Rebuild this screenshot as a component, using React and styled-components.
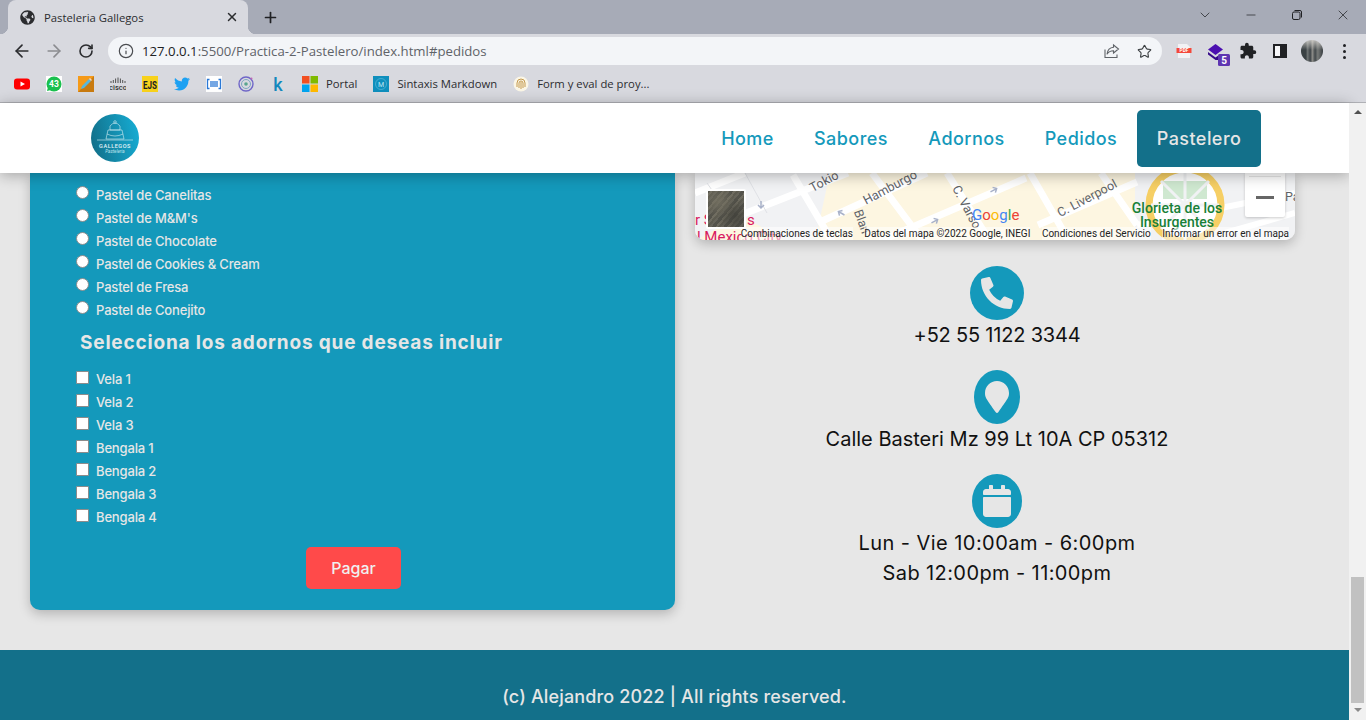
import React from "react";
import styled, { createGlobalStyle } from "styled-components";
import { FaGlobeAmericas, FaPhoneAlt, FaMapMarker, FaCalendar, FaTwitter } from "react-icons/fa";
import { MdExtension } from "react-icons/md";
import { ArrowLeft, ArrowRight, RotateCw, Info, Star, X, Plus, ChevronDown, Minus } from "lucide-react";

const GlobalStyle = createGlobalStyle`
  html, body { margin: 0; padding: 0; overflow: hidden; background: #e7e7e7; }
  * { box-sizing: border-box; }
`;

const Window = styled.div`
  width: 1366px;
  height: 720px;
  overflow: hidden;
  display: flex;
  flex-direction: column;
  font-family: Inter, "Liberation Sans", sans-serif;
`;

/* browser chrome */
const TabStrip = styled.div`
  height: 34px;
  background: #a7abb7;
  display: flex;
  align-items: center;
  padding-left: 8px;
  color: #202124;
  flex: none;
`;

const Tab = styled.div`
  position: relative;
  width: 240px;
  height: 34px;
  background: #d8d9df;
  border-radius: 8px 8px 0 0;
  display: flex;
  align-items: center;
  padding: 0 9px 0 12px;
  &::before, &::after {
    content: "";
    position: absolute;
    bottom: 0;
    width: 8px;
    height: 8px;
  }
  &::before { left: -8px; background: radial-gradient(circle at 0 0, transparent 8px, #d8d9df 8.5px); }
  &::after { right: -8px; background: radial-gradient(circle at 100% 0, transparent 8px, #d8d9df 8.5px); }
`;

const TabTitle = styled.span`
  flex: 1;
  margin-left: 9px;
  font: 11.3px "Open Sans", sans-serif;
  color: #2b2c2f;
`;

const NewTab = styled.div`
  margin-left: 14px;
  display: flex;
`;

const WindowControls = styled.div`
  margin-left: auto;
  display: flex;
  align-items: center;
  height: 100%;
`;

const WindowButton = styled.div`
  width: 46px;
  height: 100%;
  display: flex;
  align-items: center;
  justify-content: center;
  padding-bottom: 4px;
`;

const Toolbar = styled.div`
  height: 34px;
  background: #d8d9df;
  display: flex;
  align-items: center;
  padding-left: 6px;
  flex: none;
`;

const NavIcon = styled.div`
  width: 32px;
  height: 32px;
  display: flex;
  align-items: center;
  justify-content: center;
  flex: none;
`;

const Omnibox = styled.div`
  width: 1054px;
  height: 28px;
  margin: 0 6px;
  background: #f3f5f8;
  border-radius: 14px;
  display: flex;
  align-items: center;
  padding: 0 2px 0 10px;
  flex: none;
`;

const Url = styled.span`
  margin-left: 8px;
  font: 13.2px "Open Sans", sans-serif;
  color: #5f6368;
  flex: 1;
  b { font-weight: 400; color: #202124; }
`;

const Extensions = styled.div`
  display: flex;
  align-items: center;
`;

const Bookmarks = styled.div`
  height: 35px;
  background: #d8d9df;
  border-bottom: 1px solid #b0b1b6;
  display: flex;
  align-items: center;
  padding: 0 0 3px 6px;
  flex: none;
`;

const BookmarkIcon = styled.div`
  width: 32px;
  height: 28px;
  display: flex;
  align-items: center;
  justify-content: center;
`;

const Bookmark = styled.div`
  display: flex;
  align-items: center;
  gap: 8px;
  margin-left: ${(props) => props.$gap || 0}px;
  font: 11.3px "Open Sans", sans-serif;
  color: #2b2c2f;
  white-space: nowrap;
`;

/* page */
const Viewport = styled.div`
  flex: 1;
  display: flex;
  min-height: 0;
`;

const Page = styled.div`
  flex: 1;
  background: #e7e7e7;
  display: flex;
  flex-direction: column;
  min-width: 0;
`;

const Header = styled.header`
  position: relative;
  z-index: 5;
  height: 70px;
  background: #fff;
  box-shadow: 0 2px 14px rgba(0, 0, 0, 0.3);
  display: flex;
  align-items: center;
  justify-content: space-between;
  padding: 0 88px 0 91px;
  flex: none;
`;

const Menu = styled.nav`
  display: flex;
  align-items: center;
  height: 57px;
  margin-top: 1px;
`;

const MenuLink = styled.a`
  height: 100%;
  display: flex;
  align-items: center;
  justify-content: center;
  width: ${(props) => props.$width}px;
  font-size: 18px;
  font-weight: 500;
  letter-spacing: 0.45px;
  color: ${(props) => (props.$active ? "#e6e6e6" : "#1499bb")};
  background: ${(props) => (props.$active ? "#13708a" : "transparent")};
  border-radius: 5px;
`;

const Main = styled.main`
  display: grid;
  grid-template-columns: 645px 600px;
  column-gap: 20px;
  padding: 0 0 40px 30px;
  align-items: start;
  flex: none;
`;

const OrderCard = styled.form`
  height: 437px;
  background: #1499bb;
  border-radius: 0 0 10px 10px;
  box-shadow: 0 4px 12px rgba(0, 0, 0, 0.22);
  padding: 10px 0 0 46px;
  color: #e6e6e6;
  display: flex;
  flex-direction: column;
`;

const OptionRow = styled.label`
  height: 23px;
  display: flex;
  align-items: flex-start;
  font-size: 13px;
  font-weight: 500;
  letter-spacing: -0.15px;
`;

const OptionInput = styled.input`
  appearance: none;
  width: 13px;
  height: 13px;
  margin: ${(props) => (props.type === "radio" ? "3px" : "4px")} 7px 0 0;
  background: #fff;
  border: 1px solid #8c8c8c;
  border-radius: ${(props) => (props.type === "radio" ? "50%" : "1px")};
  flex: none;
`;

const OptionText = styled.span`
  padding-top: 4px;
  line-height: 16px;
`;

const SectionTitle = styled.h3`
  margin: 8px 0 11px 4px;
  font-size: 19px;
  line-height: 27px;
  font-weight: 700;
  letter-spacing: 0.82px;
  white-space: nowrap;
`;

const PayButton = styled.button`
  align-self: center;
  width: 95px;
  height: 42px;
  margin: 19px 0 0 -44px;
  background: #ff4a4a;
  color: #f0f0f0;
  border: 0;
  border-radius: 5px;
  font-family: inherit;
  font-size: 16px;
  font-weight: 500;
`;

const RightColumn = styled.section`
  display: flex;
  flex-direction: column;
  align-items: center;
`;

const MapFrame = styled.div`
  position: relative;
  width: 600px;
  height: 67px;
  border-radius: 0 0 10px 10px;
  overflow: hidden;
  box-shadow: 0 4px 12px rgba(0, 0, 0, 0.22);
  background: #f1f2f4;
  svg { display: block; }
`;

const MapThumb = styled.div`
  position: absolute;
  left: 11px;
  top: 16px;
  width: 40px;
  height: 40px;
  border: 2px solid #fff;
  border-radius: 2px;
  background:
    radial-gradient(circle at 30% 30%, rgba(120, 116, 100, 0.7), transparent 45%),
    radial-gradient(circle at 75% 70%, rgba(60, 60, 54, 0.7), transparent 50%),
    repeating-linear-gradient(-50deg, #5d5b50 0 2px, #6f6c60 2px 4px, #54534b 4px 7px, #66645a 7px 9px);
`;

const MapZoom = styled.div`
  position: absolute;
  right: 10px;
  top: 0;
  width: 40px;
  height: 44px;
  background: #fff;
  border-radius: 0 0 2px 2px;
  box-shadow: 0 1px 3px rgba(0, 0, 0, 0.2);
  display: flex;
  align-items: flex-end;
  justify-content: center;
  padding-bottom: 18px;
  &::before {
    content: "";
    position: absolute;
    top: 3px;
    left: 4px;
    right: 4px;
    height: 1px;
    background: #e6e6e6;
  }
`;

const ZoomMinus = styled.span`
  width: 18px;
  height: 3px;
  background: #666;
`;

const MapFooter = styled.div`
  position: absolute;
  right: 0;
  bottom: 0;
  height: 14px;
  padding: 1px 6px 0 45px;
  display: flex;
  align-items: center;
  gap: 11.5px;
  font: 10px/13px Roboto, sans-serif;
  color: #222;
  white-space: nowrap;
  span { background: rgba(255, 255, 255, 0.55); }
`;

const Contact = styled.div`
  display: flex;
  flex-direction: column;
  align-items: center;
  margin: ${(props) => props.$top}px 0 0 4px;
`;

const ContactBadge = styled.div`
  width: ${(props) => props.$width}px;
  height: 54px;
  border-radius: 50%;
  background: #1499bb;
  color: #e6e6e6;
  display: flex;
  align-items: center;
  justify-content: center;
  font-size: 32px;
`;

const ContactLine = styled.p`
  margin: 0;
  height: 30px;
  font-size: 20px;
  line-height: 30px;
  letter-spacing: ${(props) => props.$spacing}px;
  color: #111;
  white-space: nowrap;
`;

const Footer = styled.footer`
  height: 70px;
  background: #13708a;
  color: #e6e6e6;
  display: flex;
  justify-content: center;
  padding-top: 32px;
  font-size: 18px;
  line-height: 30px;
  font-weight: 500;
  letter-spacing: 0.15px;
  flex: none;
`;

const Scrollbar = styled.div`
  position: relative;
  z-index: 6;
  width: 17px;
  background: #f1f1f1;
  display: flex;
  flex-direction: column;
  align-items: center;
  flex: none;
`;

const ScrollArrow = styled.span`
  width: 0;
  height: 0;
  margin: ${(props) => (props.$down ? "5px 0 0" : "7px 0 0")};
  border-left: 4px solid transparent;
  border-right: 4px solid transparent;
  ${(props) => (props.$down ? "border-top: 4px solid #8a8a8a;" : "border-bottom: 4px solid #505050;")}
`;

const ScrollThumb = styled.div`
  width: 13px;
  height: 126px;
  margin-top: auto;
  background: #c1c1c1;
`;

const ScrollEnd = styled.div`
  height: 17px;
  display: flex;
  justify-content: center;
  align-items: flex-start;
`;

const Avatar = styled.div`
  width: 22px;
  height: 22px;
  border-radius: 50%;
  background:
    linear-gradient(180deg, rgba(225, 222, 216, 0.75) 0, transparent 45%),
    linear-gradient(90deg, #3a4144 0 22%, #6f7474 30%, #3d4347 42%, #8a8a86 52%, #42484b 64%, #777a78 76%, #383d41);
`;

const SidePanelIcon = styled.div`
  width: 14px;
  height: 14px;
  border: 2px solid #202124;
  border-right-width: 7px;
  background: #f6f6f8;
`;

const Dots = styled.div`
  display: flex;
  flex-direction: column;
  gap: 3px;
  span { width: 3px; height: 3px; border-radius: 50%; background: #202124; }
`;

const RestoreIcon = () => (
  <svg width="12" height="12" viewBox="0 0 12 12" fill="none" stroke="#202124">
    <rect x="1.5" y="3" width="7.5" height="7.5" rx="1.5" />
    <path d="M3.5 1.5h5.5a1.5 1.5 0 0 1 1.5 1.5v5.5" />
  </svg>
);

const ShareIcon = () => (
  <svg width="16" height="16" viewBox="0 0 16 16" fill="none" stroke="#5f6368" strokeWidth="1.1">
    <path d="M1 6.5v8h12v-3" />
    <path d="M9.5 2l5 4-5 4V7.8c-3 0-5 1-6.5 3.4C3.5 7.5 6 4.6 9.5 4.3z" />
  </svg>
);

const PdfIcon = () => (
  <svg width="16" height="16" viewBox="0 0 16 16">
    <path d="M2 1h9l3 3v11H2z" fill="#f2f2f4" />
    <rect x="0.5" y="5" width="15" height="5" fill="#f4483a" />
    <text x="8" y="9.3" textAnchor="middle" fontSize="4.8" fontWeight="700" fill="#fff" fontFamily="Roboto">PDF</text>
  </svg>
);

const StackIcon = () => (
  <svg width="32" height="32" viewBox="0 0 32 32">
    <path d="M15.500 9L23 14.500 15.500 20 8 14.500z" fill="#4b0fb0" />
    <path d="M8 17l7.500 5.500 2.500-1.800V25h-2.500L8 19.500z" fill="#36098a" />
    <rect x="18" y="19" width="12" height="12" rx="1.500" fill="#5e35b1" />
    <text x="24" y="29" textAnchor="middle" fontSize="10" fontWeight="700" fill="#fff" fontFamily="Roboto">5</text>
  </svg>
);

const YoutubeIcon = () => (
  <svg width="16" height="16" viewBox="0 0 16 16">
    <rect y="2.5" width="16" height="11" rx="3" fill="#f00" />
    <path d="M6.5 5.5L11 8l-4.500 2.500z" fill="#fff" />
  </svg>
);

const WhatsappIcon = () => (
  <svg width="16" height="16" viewBox="0 0 16 16">
    <rect width="16" height="16" fill="#fff" />
    <circle cx="8" cy="8" r="7.5" fill="#1bc04f" />
    <path d="M1 15l1-4 3 3z" fill="#1bc04f" />
    <text x="8" y="11" textAnchor="middle" fontSize="8.5" fontWeight="700" fill="#fff" fontFamily="Roboto">43</text>
  </svg>
);

const PencilIcon = () => (
  <svg width="16" height="16" viewBox="0 0 16 16">
    <rect width="16" height="16" fill="#f59a18" />
    <path d="M0 16L16 0v16z" fill="#c97b10" />
    <path d="M3 13l1-3 7-7 2 2-7 7z" fill="#57b7dd" />
    <path d="M11 3l2 2 1-1-2-2z" fill="#f5d9c0" />
  </svg>
);

const CiscoIcon = () => (
  <svg width="16" height="16" viewBox="0 0 16 16">
    <path d="M1 5v2M3.300 4v3M5.600 2.500v4.500M8 1.500v5.500M10.400 2.500v4.500M12.700 4v3M15 5v2" stroke="#444" strokeWidth="0.9" />
    <text x="8" y="14" textAnchor="middle" fontSize="7.500" fontWeight="500" fill="#333" fontFamily="Roboto">cisco</text>
  </svg>
);

const EjsIcon = () => (
  <svg width="16" height="16" viewBox="0 0 16 16">
    <rect width="16" height="16" fill="#f8d21c" />
    <text x="1" y="13" textLength="14" lengthAdjust="spacingAndGlyphs" fontSize="11.500" fontWeight="700" fill="#222" fontFamily="Roboto">EJS</text>
  </svg>
);

const BracketIcon = () => (
  <svg width="16" height="16" viewBox="0 0 16 16">
    <rect width="16" height="16" fill="#fff" />
    <path d="M3.500 3.500H1.500v9h2M12.500 3.500h2v9h-2" fill="none" stroke="#2a78d6" strokeWidth="1.300" />
    <path d="M5 5v6M7 5v6M9 5v6M11 5v6" stroke="#2a78d6" strokeWidth="1.300" />
  </svg>
);

const TargetIcon = () => (
  <svg width="16" height="16" viewBox="0 0 16 16" fill="none">
    <circle cx="8" cy="8" r="7" stroke="#6f66c8" strokeWidth="1.400" />
    <circle cx="8" cy="8" r="4.500" stroke="#7fa4c2" />
    <circle cx="8" cy="8" r="1.800" fill="#5aa58e" />
    <circle cx="13.500" cy="2.500" r="1" fill="#c267b5" />
  </svg>
);

const KIcon = () => (
  <svg width="16" height="16" viewBox="0 0 16 16">
    <text x="8" y="15" textAnchor="middle" fontSize="18" fontWeight="500" fill="#1388bd" fontFamily="Roboto">k</text>
  </svg>
);

const MicrosoftIcon = () => (
  <svg width="16" height="16" viewBox="0 0 16 16">
    <rect width="7.500" height="7.500" fill="#f25022" />
    <rect x="8.500" width="7.500" height="7.500" fill="#7fba00" />
    <rect y="8.500" width="7.500" height="7.500" fill="#00a4ef" />
    <rect x="8.500" y="8.500" width="7.500" height="7.500" fill="#ffb900" />
  </svg>
);

const MarkdownIcon = () => (
  <svg width="16" height="16" viewBox="0 0 16 16">
    <rect width="16" height="16" fill="#0f8fbd" />
    <circle cx="8" cy="8" r="5.500" fill="none" stroke="#5cbad8" strokeWidth="0.700" />
    <text x="8" y="10.500" textAnchor="middle" fontSize="7" fill="#bfe6f2" fontFamily="Roboto">M</text>
  </svg>
);

const FingerprintIcon = () => (
  <svg width="16" height="16" viewBox="0 0 16 16" fill="none">
    <circle cx="8" cy="8" r="7.500" fill="#fbf6e6" />
    <path d="M4 11V7a4 4 0 0 1 8 0v4M6 12V7a2 2 0 0 1 4 0v5M8 6v7" stroke="#c59a4e" />
  </svg>
);

const Logo = () => (
  <svg width="48" height="48" viewBox="0 0 48 48">
    <defs>
      <linearGradient id="logoFill" x1="0" y1="0.6" x2="1" y2="0.4">
        <stop offset="0" stopColor="#12708a" />
        <stop offset="1" stopColor="#16abd2" />
      </linearGradient>
    </defs>
    <circle cx="24" cy="24" r="24" fill="url(#logoFill)" />
    <g fill="none" stroke="#d5eef4" strokeWidth="0.600">
      <path d="M19 12q5-6 10 0v4H19z" />
      <path d="M17 16h14l2 9H15z" />
      <path d="M16 20q8 4 16 0" />
      <path d="M6 26h36" />
      <circle cx="24" cy="8" r="1.300" />
    </g>
    <text x="24" y="33.500" textAnchor="middle" fontSize="5.600" fontWeight="500" letterSpacing="0.500" fill="#e2f3f7" fontFamily="Roboto">GALLEGOS</text>
    <text x="24" y="39" textAnchor="middle" fontSize="4.500" fontStyle="italic" fill="#bfe3ec" fontFamily="Roboto">Pasteleria</text>
  </svg>
);

const StreetLabel = ({ x, y, angle, children }) => (
  <text x={x} y={y} transform={`rotate(${angle} ${x} ${y})`} textAnchor="middle" fontSize="12.500" fill="#5f6368" fontFamily="Roboto">
    {children}
  </text>
);

const RoadArrow = ({ x, y, angle }) => (
  <path d={`M${x - 4} ${y}h7m-3-3l3 3-3 3`} transform={`rotate(${angle} ${x} ${y})`} fill="none" stroke="#a9b2c9" strokeWidth="1.500" />
);

const MapDrawing = () => (
  <svg width="600" height="67" viewBox="0 0 600 67">
    <rect width="600" height="67" fill="#f1f2f4" />
    <polygon points="135,0 440,0 440,68 120,68" fill="#fdf6e1" />
    <polygon points="0,68 46,42 90,68" fill="#fdf6e1" />
    <g stroke="#fff" fill="none">
      <path d="M46 42L153 0M125 49L232 0M185 68L331 5M343 52L442 9M0 20L50 0" strokeWidth="7" />
      <path d="M98 2L137 68M177 0L228 68M252 0L295 68M335 0L374 68M406 0L442 52" strokeWidth="7" />
      <path d="M442 52L600 20M530 60L600 40" strokeWidth="6" />
    </g>
    <g stroke="#dfe1e5" fill="none">
      <path d="M50 0L72 40M12 10L40 50" />
      <path d="M500 0L560 0" />
    </g>
    <RoadArrow x={66} y={32} angle={90} />
    <RoadArrow x={146} y={40} angle={-150} />
    <RoadArrow x={240} y={48} angle={-28} />
    <RoadArrow x={299} y={17} angle={-28} />
    <circle cx="490" cy="32" r="36" fill="#fff" stroke="#f6cf65" strokeWidth="7" />
    <path d="M468 8h44v18h-44z" fill="#cfe8d0" />
    <path d="M490 0v68M456 32h68M466 8l48 48M514 8l-48 48" stroke="#f1f2f4" strokeWidth="3" />
    <path d="M550 12l40-10" stroke="#34a853" />
    <StreetLabel x={131} y={12} angle={-28}>Tokio</StreetLabel>
    <StreetLabel x={197} y={18} angle={-28}>Hamburgo</StreetLabel>
    <StreetLabel x={268} y={36} angle={62}>C. Varso</StreetLabel>
    <StreetLabel x={163} y={50} angle={70}>Blan</StreetLabel>
    <StreetLabel x={394} y={29} angle={-28}>C. Liverpool</StreetLabel>
    <text x="590" y="28" fontSize="12.500" fill="#5f6368" fontFamily="Roboto">Pa</text>
    <g fill="#d81b60" fontSize="15" fontFamily="Roboto">
      <text x="0" y="52">r S</text>
      <text x="52" y="52">s</text>
      <text x="2" y="69">l Mexico City</text>
    </g>
    <g textAnchor="middle" fontSize="14" fontWeight="500" fill="#188038" fontFamily="Roboto">
      <text x="482" y="40">Glorieta de los</text>
      <text x="482" y="54">Insurgentes</text>
    </g>
    <text x="277" y="47" fontSize="15" fontFamily="Roboto">
      <tspan fill="#4285f4">G</tspan>
      <tspan fill="#ea4335">o</tspan>
      <tspan fill="#fbbc05">o</tspan>
      <tspan fill="#4285f4">g</tspan>
      <tspan fill="#34a853">l</tspan>
      <tspan fill="#ea4335">e</tspan>
    </text>
  </svg>
);

const flavours = [
  "Pastel de Canelitas",
  "Pastel de M&M's",
  "Pastel de Chocolate",
  "Pastel de Cookies & Cream",
  "Pastel de Fresa",
  "Pastel de Conejito",
];

const extras = ["Vela 1", "Vela 2", "Vela 3", "Bengala 1", "Bengala 2", "Bengala 3", "Bengala 4"];

const App = () => {
  return (
    <Window>
      <GlobalStyle />
      <TabStrip>
        <Tab>
          <FaGlobeAmericas size={15} color="#2b2c2f" />
          <TabTitle>Pasteleria Gallegos</TabTitle>
          <X size={14} strokeWidth={2.5} color="#2b2c2f" />
        </Tab>
        <NewTab>
          <Plus size={17} strokeWidth={2.4} color="#202124" />
        </NewTab>
        <WindowControls>
          <WindowButton><ChevronDown size={16} strokeWidth={1.1} color="#202124" /></WindowButton>
          <WindowButton><Minus size={14} strokeWidth={1.2} color="#202124" /></WindowButton>
          <WindowButton><RestoreIcon /></WindowButton>
          <WindowButton><X size={16} strokeWidth={1.1} color="#202124" /></WindowButton>
        </WindowControls>
      </TabStrip>
      <Toolbar>
        <NavIcon><ArrowLeft size={20} strokeWidth={2} color="#2b2c2f" /></NavIcon>
        <NavIcon><ArrowRight size={20} strokeWidth={2} color="#8b8c90" /></NavIcon>
        <NavIcon><RotateCw size={16} strokeWidth={2.4} color="#2b2c2f" /></NavIcon>
        <Omnibox>
          <Info size={16} strokeWidth={1.8} color="#4a4c50" />
          <Url><b>127.0.0.1</b>:5500/Practica-2-Pastelero/index.html#pedidos</Url>
          <NavIcon><ShareIcon /></NavIcon>
          <NavIcon><Star size={15} strokeWidth={1.8} color="#3c4043" /></NavIcon>
        </Omnibox>
        <Extensions>
          <NavIcon><PdfIcon /></NavIcon>
          <NavIcon><StackIcon /></NavIcon>
          <NavIcon><MdExtension size={18} color="#202124" /></NavIcon>
          <NavIcon><SidePanelIcon /></NavIcon>
          <NavIcon><Avatar /></NavIcon>
          <NavIcon><Dots><span /><span /><span /></Dots></NavIcon>
        </Extensions>
      </Toolbar>
      <Bookmarks>
        <BookmarkIcon><YoutubeIcon /></BookmarkIcon>
        <BookmarkIcon><WhatsappIcon /></BookmarkIcon>
        <BookmarkIcon><PencilIcon /></BookmarkIcon>
        <BookmarkIcon><CiscoIcon /></BookmarkIcon>
        <BookmarkIcon><EjsIcon /></BookmarkIcon>
        <BookmarkIcon><FaTwitter size={16} color="#1da1f2" /></BookmarkIcon>
        <BookmarkIcon><BracketIcon /></BookmarkIcon>
        <BookmarkIcon><TargetIcon /></BookmarkIcon>
        <BookmarkIcon><KIcon /></BookmarkIcon>
        <Bookmark $gap={8}><MicrosoftIcon />Portal</Bookmark>
        <Bookmark $gap={16}><MarkdownIcon />Sintaxis Markdown</Bookmark>
        <Bookmark $gap={16}><FingerprintIcon />Form y eval de proy...</Bookmark>
      </Bookmarks>
      <Viewport>
        <Page>
          <Header>
            <Logo />
            <Menu>
              <MenuLink $width={93}>Home</MenuLink>
              <MenuLink $width={114}>Sabores</MenuLink>
              <MenuLink $width={117}>Adornos</MenuLink>
              <MenuLink $width={112}>Pedidos</MenuLink>
              <MenuLink $width={124} $active>Pastelero</MenuLink>
            </Menu>
          </Header>
          <Main>
            <OrderCard>
              {flavours.map((name) => (
                <OptionRow key={name}>
                  <OptionInput type="radio" name="sabor" />
                  <OptionText>{name}</OptionText>
                </OptionRow>
              ))}
              <SectionTitle>Selecciona los adornos que deseas incluir</SectionTitle>
              {extras.map((name) => (
                <OptionRow key={name}>
                  <OptionInput type="checkbox" />
                  <OptionText>{name}</OptionText>
                </OptionRow>
              ))}
              <PayButton type="button">Pagar</PayButton>
            </OrderCard>
            <RightColumn>
              <MapFrame>
                <MapDrawing />
                <MapThumb />
                <MapZoom><ZoomMinus /></MapZoom>
                <MapFooter>
                  <span>Combinaciones de teclas</span>
                  <span>Datos del mapa ©2022 Google, INEGI</span>
                  <span>Condiciones del Servicio</span>
                  <span>Informar un error en el mapa</span>
                </MapFooter>
              </MapFrame>
              <Contact $top={26}>
                <ContactBadge $width={54}><FaPhoneAlt /></ContactBadge>
                <ContactLine $spacing={-0.2}>+52 55 1122 3344</ContactLine>
              </Contact>
              <Contact $top={20}>
                <ContactBadge $width={46}><FaMapMarker /></ContactBadge>
                <ContactLine $spacing={0}>Calle Basteri Mz 99 Lt 10A CP 05312</ContactLine>
              </Contact>
              <Contact $top={20}>
                <ContactBadge $width={50}><FaCalendar /></ContactBadge>
                <ContactLine $spacing={0.45}>Lun - Vie 10:00am - 6:00pm</ContactLine>
                <ContactLine $spacing={0.4}>Sab 12:00pm - 11:00pm</ContactLine>
              </Contact>
            </RightColumn>
          </Main>
          <Footer>(c) Alejandro 2022 | All rights reserved.</Footer>
        </Page>
        <Scrollbar>
          <ScrollArrow />
          <ScrollThumb />
          <ScrollEnd><ScrollArrow $down /></ScrollEnd>
        </Scrollbar>
      </Viewport>
    </Window>
  );
};

export default App;
